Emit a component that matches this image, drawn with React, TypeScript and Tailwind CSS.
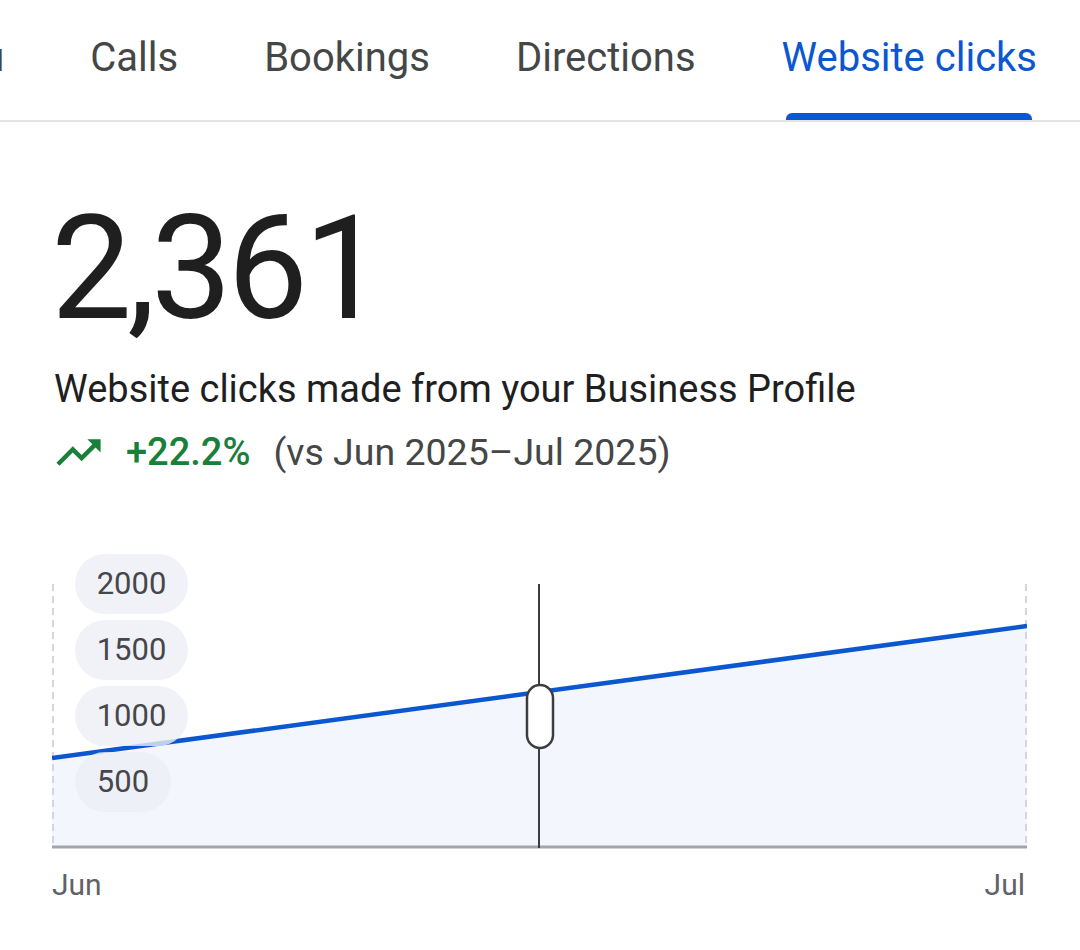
import React from "react";

const tabs = ["Menu", "Calls", "Bookings", "Directions", "Website clicks"];

export default function App() {
  const pills = [
    { label: "2000", w: 113 },
    { label: "1500", w: 113 },
    { label: "1000", w: 113 },
    { label: "500", w: 96 },
  ];
  return (
    <div className="w-[1080px] h-[950px] bg-white overflow-hidden" style={{ fontFamily: "Roboto, 'Noto Sans', sans-serif" }}>
      {/* Tabs */}
      <div className="relative h-[122px] border-b-2 border-[#e3e3e3] flex justify-end overflow-hidden">
        {tabs.map((t, i) => {
          const active = i === tabs.length - 1;
          return (
            <div key={t} className="relative shrink-0 h-[120px] px-[43px] pt-[38px]">
              <span className={`block text-[40px] leading-[40px] font-normal whitespace-nowrap ${active ? "text-[#0b57d0]" : "text-[#444746]"}`}>
                {t}
              </span>
              {active && (
                <div className="absolute left-[47px] right-[48px] bottom-0 h-[7px] rounded-t-[6px] bg-[#0b57d0]" />
              )}
            </div>
          );
        })}
      </div>

      <div className="pl-[54px]">
        <div className="mt-[75px] text-[144px] leading-[144px] text-[#1f1f1f] tracking-[-0.032em] -ml-[3px]">2,361</div>
        <div className="mt-[29px] text-[38px] leading-[38px] text-[#1f1f1f]">Website clicks made from your Business Profile</div>
        <div className="mt-[25px] flex items-center h-[38px]">
          <svg viewBox="0 0 24 24" width="53" height="53" className="-ml-[2px] mr-[21px] shrink-0" fill="#188038">
            <path d="M16 6l2.29 2.29-4.88 4.88-4-4L2 16.59 3.41 18l6-6 4 4 6.3-6.29L22 12V6z" />
          </svg>
          <span className="text-[38px] leading-[38px] font-medium text-[#188038]">+22.2%</span>
          <span className="ml-[23px] text-[37.5px] leading-[38px] text-[#444746]">(vs Jun 2025–Jul 2025)</span>
        </div>
      </div>

      {/* Chart */}
      <div className="ml-[52px] mt-[83px] w-[975px]">
        <div className="relative h-[295px]">
          <svg width="975" height="295" className="absolute inset-0">
            <polygon points="0,204 975,72 975,292 0,292" fill="#f3f6fd" />
            <line x1="1" y1="30" x2="1" y2="292" stroke="#d3d6dc" strokeWidth="2" strokeDasharray="7 5" />
            <line x1="974" y1="30" x2="974" y2="292" stroke="#d3d6dc" strokeWidth="2" strokeDasharray="7 5" />
            <line x1="0" y1="204" x2="975" y2="72" stroke="#0b57d0" strokeWidth="4.5" />
            <line x1="0" y1="293" x2="975" y2="293" stroke="#a3a5a9" strokeWidth="3" />
          </svg>
          {pills.map((p, i) => (
            <div
              key={p.label}
              className="absolute left-[23px] h-[60px] rounded-full bg-[#eceff6]/80 flex items-center justify-center text-[31px] text-[#46474a]"
              style={{ top: i * 66, width: p.w }}
            >
              {p.label}
            </div>
          ))}
          <svg width="975" height="295" className="absolute inset-0">
            <line x1="487" y1="30" x2="487" y2="294" stroke="#3c3d40" strokeWidth="2" />
            <rect x="475" y="131" width="26" height="63" rx="13" fill="#ffffff" stroke="#3c3d40" strokeWidth="2.5" />
          </svg>
        </div>
        <div className="mt-[21px] flex justify-between text-[30px] leading-[30px] text-[#5f6368] pr-[2px]">
          <span>Jun</span>
          <span>Jul</span>
        </div>
      </div>
    </div>
  );
}
